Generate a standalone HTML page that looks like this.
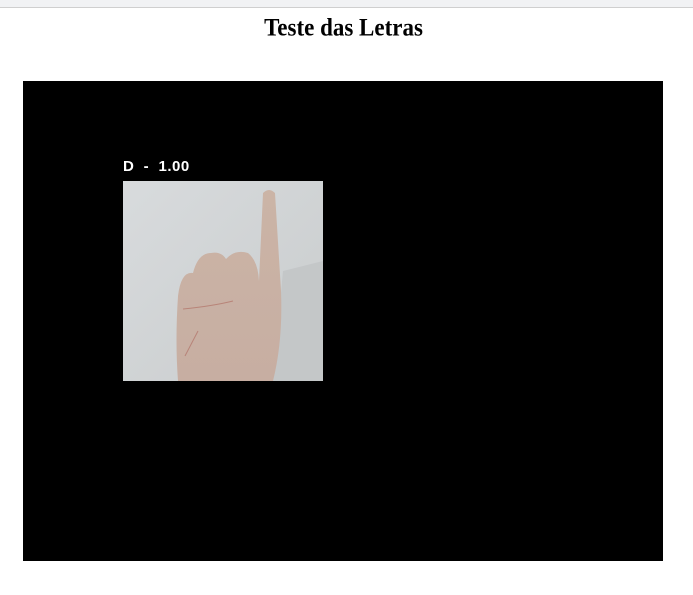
<!DOCTYPE html>
<html><head><meta charset="utf-8"><style>
html,body{margin:0;padding:0;background:#fff;width:693px;height:595px;overflow:hidden}
.bar{position:absolute;left:0;top:0;width:693px;height:7px;background:#f1f2f4;border-bottom:1px solid #cfcfcf}
h1{position:absolute;top:15px;left:0;width:687px;margin:0;text-align:center;font:bold 23px "Liberation Serif",serif;color:#000;transform:scaleY(1.08)}
.v{position:absolute;left:23px;top:81px;width:640px;height:480px;background:#000}
.lbl{position:absolute;left:123px;top:158px;color:#fff;font:bold 15px "Liberation Sans",sans-serif;letter-spacing:0.5px}
svg{position:absolute;left:123px;top:181px}
</style></head><body>
<div class="bar"></div>
<h1>Teste das Letras</h1>
<div class="v"></div>
<div class="lbl">D &nbsp;- &nbsp;1.00</div>
<svg width="200" height="200" viewBox="0 0 200 200">
<defs><linearGradient id="bg" x1="0" y1="0" x2="1" y2="1"><stop offset="0" stop-color="#d8dbdd"/><stop offset="1" stop-color="#c9cccd"/></linearGradient>
<linearGradient id="sk" x1="0" y1="0" x2="0" y2="1"><stop offset="0" stop-color="#cbb4a6"/><stop offset="1" stop-color="#c7aea2"/></linearGradient></defs>
<rect width="200" height="200" fill="url(#bg)"/>
<polygon points="160,90 200,80 200,200 150,200" fill="#c4c7c8"/>
<path d="M140,12 Q146,6 152,12 L158,110 Q160,160 150,200 L55,200 Q52,160 55,115 Q58,90 70,92 Q75,72 88,72 Q98,70 103,78 Q112,68 125,72 Q135,80 136,100 Z" fill="url(#sk)"/>
<path d="M60,128 Q90,125 110,120 M75,150 L62,175" stroke="#b88479" stroke-width="1" fill="none"/>
</svg>
</body></html>
